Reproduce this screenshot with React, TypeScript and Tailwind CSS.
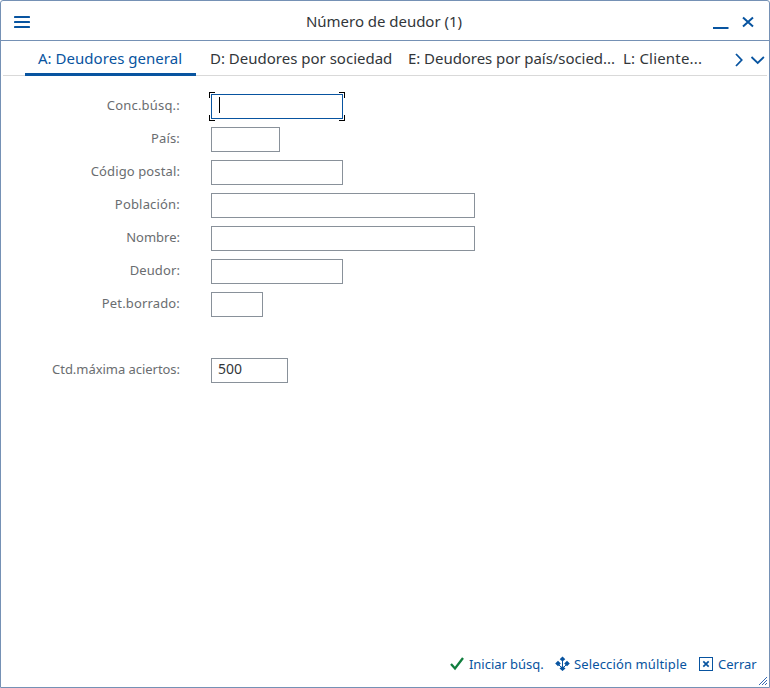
type Field = { label: string; box: string; tracking: string; value?: string; focused?: boolean };

const fields: Field[] = [
  { label: 'Conc.búsq.:', box: 'w-[132px]', tracking: 'tracking-[0.2px]', focused: true },
  { label: 'País:', box: 'w-[69px]', tracking: 'tracking-[0.15px]' },
  { label: 'Código postal:', box: 'w-[132px]', tracking: 'tracking-[0.12px]' },
  { label: 'Población:', box: 'w-[264px]', tracking: 'tracking-[0.18px]' },
  { label: 'Nombre:', box: 'w-[264px]', tracking: 'tracking-normal' },
  { label: 'Deudor:', box: 'w-[132px]', tracking: 'tracking-[0.1px]' },
  { label: 'Pet.borrado:', box: 'w-[52px]', tracking: 'tracking-[0.15px]' },
];

function Row({ label, box, tracking, value, focused }: Field) {
  return (
    <div className="flex h-[33px] items-start">
      <div className={`w-[179px] pt-[1px] text-right text-[13px] leading-[20px] whitespace-nowrap text-[#6a6d70] ${tracking}`}>
        {label}
      </div>
      <div
        className={`relative ml-[31px] h-[25px] border bg-white pl-[6px] text-[14px] leading-[20px] text-[#32363a] ${box} ${focused ? 'border-[#0854a0]' : 'border-[#89919a]'}`}
      >
        {value}
        {focused && (
          <>
            <span className="absolute top-[2px] left-[7px] h-[16px] w-px bg-black" />
            <span className="absolute -top-[3px] -left-[3px] size-[6px] border-t border-l border-black" />
            <span className="absolute -top-[3px] -right-[3px] size-[6px] border-t border-r border-black" />
            <span className="absolute -bottom-[3px] -left-[3px] size-[6px] border-b border-l border-black" />
            <span className="absolute -right-[3px] -bottom-[3px] size-[6px] border-r border-b border-black" />
          </>
        )}
      </div>
    </div>
  );
}

export default function App() {
  return (
    <div className="flex h-[688px] w-[770px] flex-col overflow-hidden rounded-t-[3px] border border-[#7591b5] bg-white font-['Noto_Sans',sans-serif] text-[#32363a]">
      <header className="flex h-[40px] shrink-0 items-center border-b border-[#7591b5] text-[#0854a0]">
        <svg className="mt-[2px] ml-[13px] shrink-0" width="16" height="12" fill="currentColor">
          <rect y="0" width="16" height="2" rx=".4" />
          <rect y="5" width="16" height="2" rx=".4" />
          <rect y="10" width="16" height="2" rx=".4" />
        </svg>
        <h1 className="ml-[276px] w-[380px] text-[15px] leading-[24px] tracking-[-0.03px] whitespace-nowrap text-[#32363a]">
          Número de deudor (1)
        </h1>
        <svg className="mt-[2px] ml-[26px]" width="44" height="16" fill="none" stroke="currentColor">
          <path d="M1 14h15.500" strokeWidth="2" />
          <path d="M31 3.500l10 9M41 3.500l-10 9" strokeWidth="2" />
        </svg>
      </header>
      <nav className="mx-[2px] flex h-[35px] shrink-0 items-start border-b border-[#d9d9d9] text-[15px] leading-[35px] whitespace-nowrap">
        <div className="ml-[22px] h-[35px] w-[171px] border-b-[3px] border-[#0854a0] pl-[13px] tracking-[0.03px] text-[#0854a0]">
          A: Deudores general
        </div>
        <div className="ml-[14px] w-[198px]">D: Deudores por sociedad</div>
        <div className="w-[215px] tracking-[-0.05px]">E: Deudores por país/socied...</div>
        <div className="w-[111px] tracking-[0.2px]">L: Cliente...</div>
        <svg className="mt-[11px] text-[#0854a0]" width="31" height="16" fill="none" stroke="currentColor" strokeWidth="1.800">
          <path d="M2 2l5.700 6L2 14" />
          <path d="M17.500 5l6.200 6L29.900 5" />
        </svg>
      </nav>
      <main className="flex flex-col pt-[18px]">
        {fields.map((f) => (
          <Row key={f.label} {...f} />
        ))}
        <div className="h-[33px]" />
        <Row label="Ctd.máxima aciertos:" box="w-[77px]" tracking="tracking-[-0.04px]" value="500" />
      </main>
      <footer className="relative mt-auto flex h-[46px] items-center text-[13px] leading-[20px] whitespace-nowrap text-[#0854a0]">
        <svg className="ml-[449px]" width="14" height="14" fill="none" stroke="#107e3e" strokeWidth="2.300">
          <path d="M1 7l4 4.500L13 1" />
        </svg>
        <span className="ml-[5px] w-[86px] tracking-[-0.04px]">Iniciar búsq.</span>
        <svg width="15" height="16" fill="currentColor">
          <path d="M7.500 .5l2.800 2.800-2.800 2.200-2.800-2.200zM3 4.700l2.800 2.800L3 10.300 .2 7.500zM12 4.700l2.800 2.800-2.800 2.800-2.800-2.800zM7.500 9.800l3 2.600-3 2.600-3-2.600zM7 4h1v6H7z" />
          <path d="M3 8l4 4M12 8l-4 4" fill="none" stroke="currentColor" strokeDasharray="5 1" />
        </svg>
        <span className="ml-[4px] w-[125px] tracking-[0.13px]">Selección múltiple</span>
        <svg width="14" height="14" fill="none" stroke="currentColor">
          <rect x=".5" y=".5" width="13" height="13" />
          <path d="M4.300 4.300l5.400 5.400M9.700 4.300L4.300 9.700" strokeWidth="1.700" />
        </svg>
        <span className="ml-[5px]">Cerrar</span>
        <svg className="absolute right-[2px] bottom-[2px]" width="8" height="8" stroke="#3568b0" fill="none">
          <path d="M0 8L8 0M3 8l5-5M6 8l2-2" />
        </svg>
      </footer>
    </div>
  );
}
